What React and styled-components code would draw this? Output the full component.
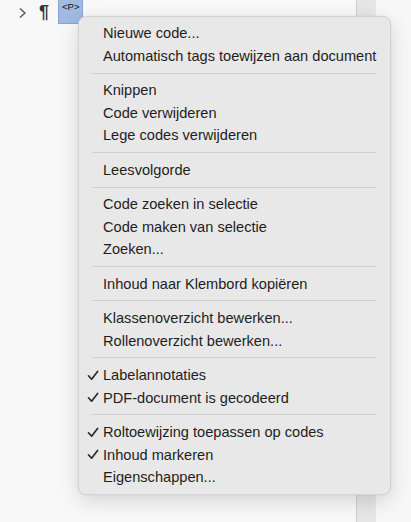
import React from "react";
import styled, { createGlobalStyle } from "styled-components";

const GlobalStyle = createGlobalStyle`
  html, body {
    margin: 0;
    padding: 0;
    background: #f7f7f7;
  }
  body {
    font-family: "Liberation Sans", Arial, sans-serif;
  }
`;

const Root = styled.div`
  position: relative;
  width: 411px;
  height: 522px;
  overflow: hidden;
  display: flex;
  background: #f6f6f6;
`;

const TreePane = styled.div`
  width: 356px;
  height: 100%;
  background: #f8f8f8;
  border-right: 1px solid #cfcfcf;
`;

const ScrollStrip = styled.div`
  width: 18px;
  height: 100%;
  background: #e6e6e6;
  border-right: 1px solid #e9e9e9;
`;

const Filler = styled.div`
  flex: 1;
  background: #f7f7f7;
`;

const TagRow = styled.div`
  display: flex;
  align-items: flex-start;
  height: 24px;
  padding-left: 18px;
`;

const Chevron = styled.svg`
  width: 9px;
  height: 12px;
  margin-top: 7px;
`;

const Pilcrow = styled.span`
  margin-left: 12px;
  margin-top: 2px;
  font-size: 18px;
  font-weight: bold;
  line-height: 20px;
  color: #333;
`;

const TagBox = styled.span`
  margin-left: 9px;
  height: 23px;
  padding: 0 3px;
  background: #9fbbe0;
  border: 1px solid #86a6d2;
  border-top: none;
  font-size: 9.5px;
  color: #111;
  line-height: 14px;
`;

const Menu = styled.div`
  position: absolute;
  left: 78px;
  top: 16px;
  width: 313px;
  padding: 5px 0;
  box-sizing: border-box;
  background: #e8e8e8;
  border: 1px solid #d4d4d4;
  border-radius: 8px;
  box-shadow: 0 6px 20px rgba(0, 0, 0, 0.14), 0 0 2px rgba(0, 0, 0, 0.08);
`;

const Item = styled.div`
  display: flex;
  align-items: center;
  height: 22.6px;
  padding-left: 8px;
  font-size: 14.6px;
  color: #1e1e1e;
  white-space: nowrap;
`;

const CheckSlot = styled.span`
  width: 16px;
  display: flex;
  align-items: center;
`;

const Separator = styled.div`
  height: 1px;
  margin: 5.4px 13px 5.4px 13px;
  background: #d0d0d0;
`;

const Check = () => (
  <svg width="12" height="11" viewBox="0 0 12 11">
    <path
      d="M1.5 5.8 L4.6 9.2 L10.6 1.4"
      fill="none"
      stroke="#2b2b2b"
      strokeWidth="1.7"
      strokeLinecap="round"
      strokeLinejoin="round"
    />
  </svg>
);

const groups = [
  [{ label: "Nieuwe code..." }, { label: "Automatisch tags toewijzen aan document" }],
  [{ label: "Knippen" }, { label: "Code verwijderen" }, { label: "Lege codes verwijderen" }],
  [{ label: "Leesvolgorde" }],
  [{ label: "Code zoeken in selectie" }, { label: "Code maken van selectie" }, { label: "Zoeken..." }],
  [{ label: "Inhoud naar Klembord kopiëren" }],
  [{ label: "Klassenoverzicht bewerken..." }, { label: "Rollenoverzicht bewerken..." }],
  [
    { label: "Labelannotaties", checked: true },
    { label: "PDF-document is gecodeerd", checked: true },
  ],
  [
    { label: "Roltoewijzing toepassen op codes", checked: true },
    { label: "Inhoud markeren", checked: true },
    { label: "Eigenschappen..." },
  ],
];

export default function App() {
  return (
    <Root>
      <GlobalStyle />
      <TreePane>
        <TagRow>
          <Chevron viewBox="0 0 9 12">
            <path d="M2 1.5 L7 6 L2 10.5" fill="none" stroke="#555" strokeWidth="1.4" />
          </Chevron>
          <Pilcrow>¶</Pilcrow>
          <TagBox>&lt;P&gt;</TagBox>
        </TagRow>
      </TreePane>
      <ScrollStrip />
      <Filler />
      <Menu>
        {groups.map((group, gi) => (
          <React.Fragment key={gi}>
            {gi > 0 && <Separator />}
            {group.map((item) => (
              <Item key={item.label}>
                <CheckSlot>{item.checked && <Check />}</CheckSlot>
                {item.label}
              </Item>
            ))}
          </React.Fragment>
        ))}
      </Menu>
    </Root>
  );
}
